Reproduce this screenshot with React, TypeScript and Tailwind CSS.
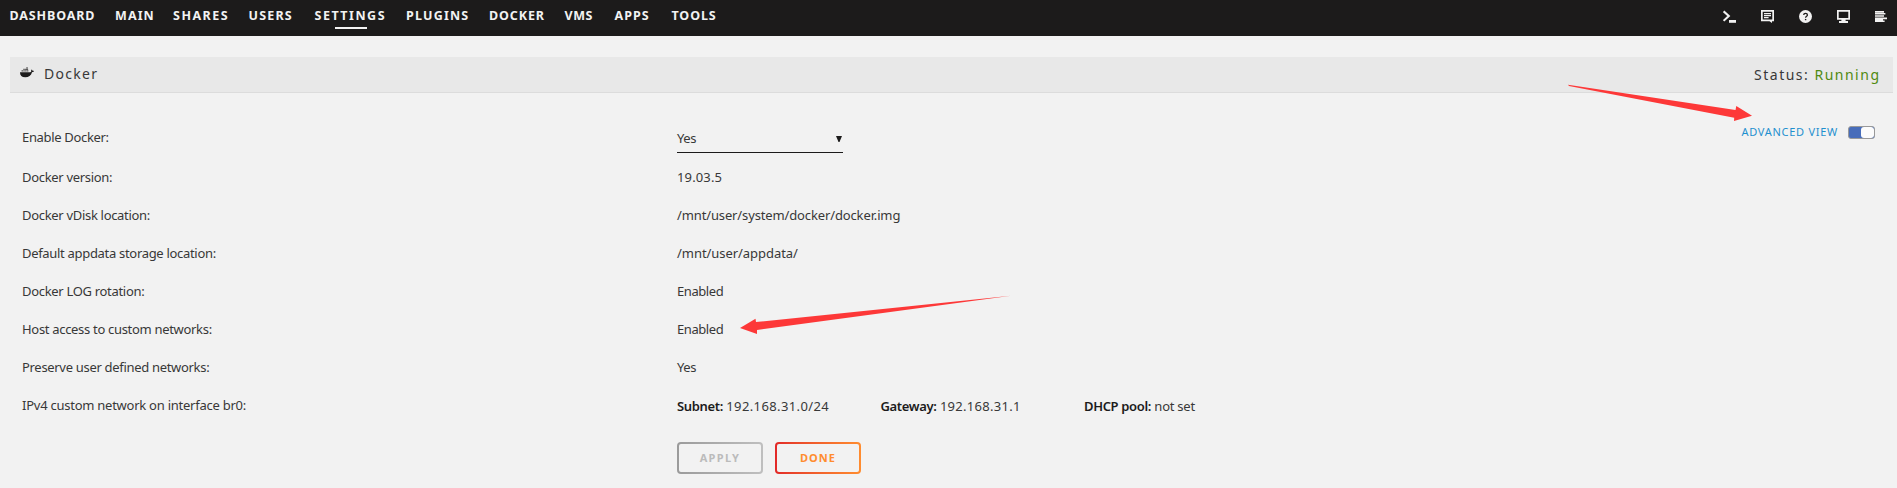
import type { ReactNode } from "react";

const navItems = [
  { name: "DASHBOARD", box: "w-[105.5px] tracking-[0.88px]" },
  { name: "MAIN", box: "w-[58px] tracking-[1.1px]" },
  { name: "SHARES", box: "w-[75.5px] tracking-[1.5px]" },
  { name: "USERS", box: "w-[66px] tracking-[1.2px]" },
  { name: "SETTINGS", box: "w-[91.5px] tracking-[1.5px]" },
  { name: "PLUGINS", box: "w-[83px] tracking-[1.2px]" },
  { name: "DOCKER", box: "w-[75.5px] tracking-[0.88px]" },
  { name: "VMS", box: "w-[50px] tracking-[0.6px]" },
  { name: "APPS", box: "w-[57px] tracking-[1px]" },
  { name: "TOOLS", box: "w-[60px] tracking-[0.9px]" },
];

const rows = [
  { label: "Docker version:", value: "19.03.5", spacing: "tracking-[0.14px]" },
  { label: "Docker vDisk location:", value: "/mnt/user/system/docker/docker.img", spacing: "tracking-[-0.13px]" },
  { label: "Default appdata storage location:", value: "/mnt/user/appdata/", spacing: "tracking-[-0.05px]" },
  { label: "Docker LOG rotation:", value: "Enabled", spacing: "tracking-[-0.42px]" },
  { label: "Host access to custom networks:", value: "Enabled", spacing: "tracking-[-0.42px]" },
  { label: "Preserve user defined networks:", value: "Yes", spacing: "tracking-[-0.45px]" },
];

const network = [
  { name: "Subnet:", value: "192.168.31.0/24", box: "w-[203.5px]", spacing: "tracking-[0.38px]" },
  { name: "Gateway:", value: "192.168.31.1", box: "w-[203.5px]", spacing: "tracking-[0.3px]" },
  { name: "DHCP pool:", value: "not set", box: "", spacing: "tracking-[-0.25px]" },
];

function Icon({ children }: { children: ReactNode }) {
  return (
    <svg className="h-[13px] w-[13px] text-[#f2f2f2]" viewBox="0 0 13 13" fill="currentColor">
      {children}
    </svg>
  );
}

function Toolbar() {
  return (
    <div className="mr-[9px] mt-[10px] flex gap-[25px]">
      <Icon>
        <path d="M0.6 1.4 5.8 6 0.6 10.8" fill="none" stroke="currentColor" strokeWidth="2.1" />
        <path d="M6 10h7v2.8h-7z" />
      </Icon>
      <Icon>
        <path fillRule="evenodd" d="M0 0h13v11.3h-2V13L8.5 11.3H0zM1.7 1.7v7.9h9.6V1.7z" />
        <path d="M3 3h7v1.2H3zM3 5h7v1.2H3zM3 7h4.6v1.2H3z" />
      </Icon>
      <svg className="h-[13px] w-[13px]" viewBox="0 0 13 13">
        <circle cx="6.5" cy="6.5" r="6.5" fill="#f2f2f2" />
        <path d="M4.7 5.1c0-2.5 3.7-2.3 3.7-.2 0 1.4-1.8 1.3-1.8 2.9" fill="none" stroke="#1c1b1b" strokeWidth="1.3" />
        <path d="M5.9 8.9h1.4v1.3H5.9z" fill="#1c1b1b" />
      </svg>
      <Icon>
        <path fillRule="evenodd" d="M0 0h13v9.8H8.6v1.2H11V13H2v-2h2.4V9.8H0zM1.7 1.7v6.4h9.6V1.7z" />
      </Icon>
      <Icon>
        <path d="M0 1h9v1.7H0zM0 3h10.4v1.6H0zM0 5.2h9v1.6H0zM0 7.4h12v1.8H0zM0 9h8v1.4H0zM0 10.4h9.6V12H0z" />
      </Icon>
    </div>
  );
}

function Whale() {
  return (
    <svg className="h-[11px] w-[14px]" viewBox="0 0 14 11" fill="#1c1b1b">
      <path d="M0 5.2h10.2c.9 0 1.1-.4 1-1.1-.2-.6-.1-1.2.4-1.7.6.3.9.8.9 1.3.5-.1 1 0 1.5.3-.3.8-1 1.2-2 1.2C11.1 8.6 8.7 10.3 5.3 10.3 1.7 10.3 0 8.4 0 5.2z" />
      <path d="M1.5 3.3h1.5v1.3H1.5zM3.3 3.3h1.5v1.3H3.3zM5.1 3.3h1.5v1.3H5.1zM6.9 3.3h1.5v1.3H6.9zM3.3 1.7h1.5v1.2H3.3zM5.1 1.7h1.5v1.2H5.1zM6.6 1.7h1.5v1.2H6.6zM6.3.2h1.5v1.2H6.3z" opacity=".7" />
    </svg>
  );
}

export default function App() {
  return (
    <div className="relative h-[488px] w-full overflow-hidden bg-[#f2f2f2] font-['Noto_Sans',sans-serif] text-[13px] leading-[18px] text-[#383838]">
      <header className="flex h-9 justify-between bg-[#1c1b1b]">
        <nav className="flex pl-[9.5px] pt-[7px] text-[12.5px] font-bold leading-[18px] text-[#f2f2f2]">
          {navItems.map((item) => (
            <a key={item.name} className={`flex flex-col whitespace-nowrap ${item.box}`}>
              {item.name}
              {item.name === "SETTINGS" && <span className="ml-[20px] mt-[2px] h-[2px] w-8 bg-[#f2f2f2]" />}
            </a>
          ))}
        </nav>
        <Toolbar />
      </header>

      <div className="ml-[10px] mr-1 mt-[21px] flex h-9 justify-between border-b border-[#dcdcdc] bg-[#e8e8e8] text-[14px]">
        <div className="flex pl-[10px]">
          <span className="mt-[10px]"><Whale /></span>
          <span className="ml-[10px] mt-2 tracking-[1.3px]">Docker</span>
        </div>
        <div className="mr-[12.5px] mt-[9px] tracking-[1.5px]">
          Status: <span className="text-[#4f8a10]">Running</span>
        </div>
      </div>

      <main className="pl-[22px]">
        <div className="flex h-[75px] pt-[35px]">
          <div className="w-[655px] tracking-[-0.33px]">Enable Docker:</div>
          <div className="flex h-[25px] w-[166px] justify-between border-b border-[#1c1b1b] pt-px">
            <span className="tracking-[-0.45px]">Yes</span>
            <svg className="mr-px mt-[7px] h-[6px] w-[6px]" viewBox="0 0 6 6"><path d="M0 0h6L3.5 6h-1z" fill="#1c1b1b" /></svg>
          </div>
          <div className="ml-auto mr-[22px] flex h-[18px] items-center text-[11px]">
            <span className="mt-[-11px] whitespace-nowrap tracking-[0.73px] text-[#1f90cf]">ADVANCED VIEW</span>
            <span className="ml-[10px] mt-[-9px] flex h-[13px] w-[27px] overflow-hidden rounded-[3px] border border-[#999] bg-[#486dba]">
              <span className="w-3" />
              <span className="flex-1 rounded-[3px] bg-[#fcfcfc]" />
            </span>
          </div>
        </div>
        {rows.map((row) => (
          <div key={row.label} className="flex h-[38px]">
            <div className="w-[655px] tracking-[-0.31px]">{row.label}</div>
            <div className={row.spacing}>{row.value}</div>
          </div>
        ))}
        <div className="flex h-[46px]">
          <div className="w-[655px] tracking-[-0.25px]">IPv4 custom network on interface br0:</div>
          <div className="flex pt-px">
            {network.map((n) => (
              <div key={n.name} className={n.box}>
                <b className="font-semibold tracking-[-0.35px] text-[#1c1b1b]">{n.name}</b>{" "}
                <span className={n.spacing}>{n.value}</span>
              </div>
            ))}
          </div>
        </div>
        <div className="flex gap-3 pl-[655px] text-[11px] font-bold">
          <button className="h-8 w-[86px] rounded-[4px] bg-linear-to-r from-[#9b9b9b] to-[#bfbfbf] p-[2px] text-[#bbb]">
            <span className="flex h-full items-center justify-center rounded-[2px] bg-[#f2f2f2] tracking-[1.35px]">APPLY</span>
          </button>
          <button className="h-8 w-[86px] rounded-[4px] bg-linear-to-r from-[#e22828] to-[#ff8c2f] p-[2px] text-[#ff8c2f]">
            <span className="flex h-full items-center justify-center rounded-[2px] bg-[#f2f2f2] tracking-[1px]">DONE</span>
          </button>
        </div>
      </main>

      <svg className="pointer-events-none absolute left-0 top-0 h-[488px] w-[1897px]" viewBox="0 0 1897 488" fill="#fd3838">
        <path d="M1568 84.7 1569 86 1734.2 117.8 1734 121 1752 115.7 1736.3 106 1735.5 110z" />
        <path d="M740 328 755.5 318.7 756 322 1011 295.7 757 330 757 334z" />
      </svg>
    </div>
  );
}
